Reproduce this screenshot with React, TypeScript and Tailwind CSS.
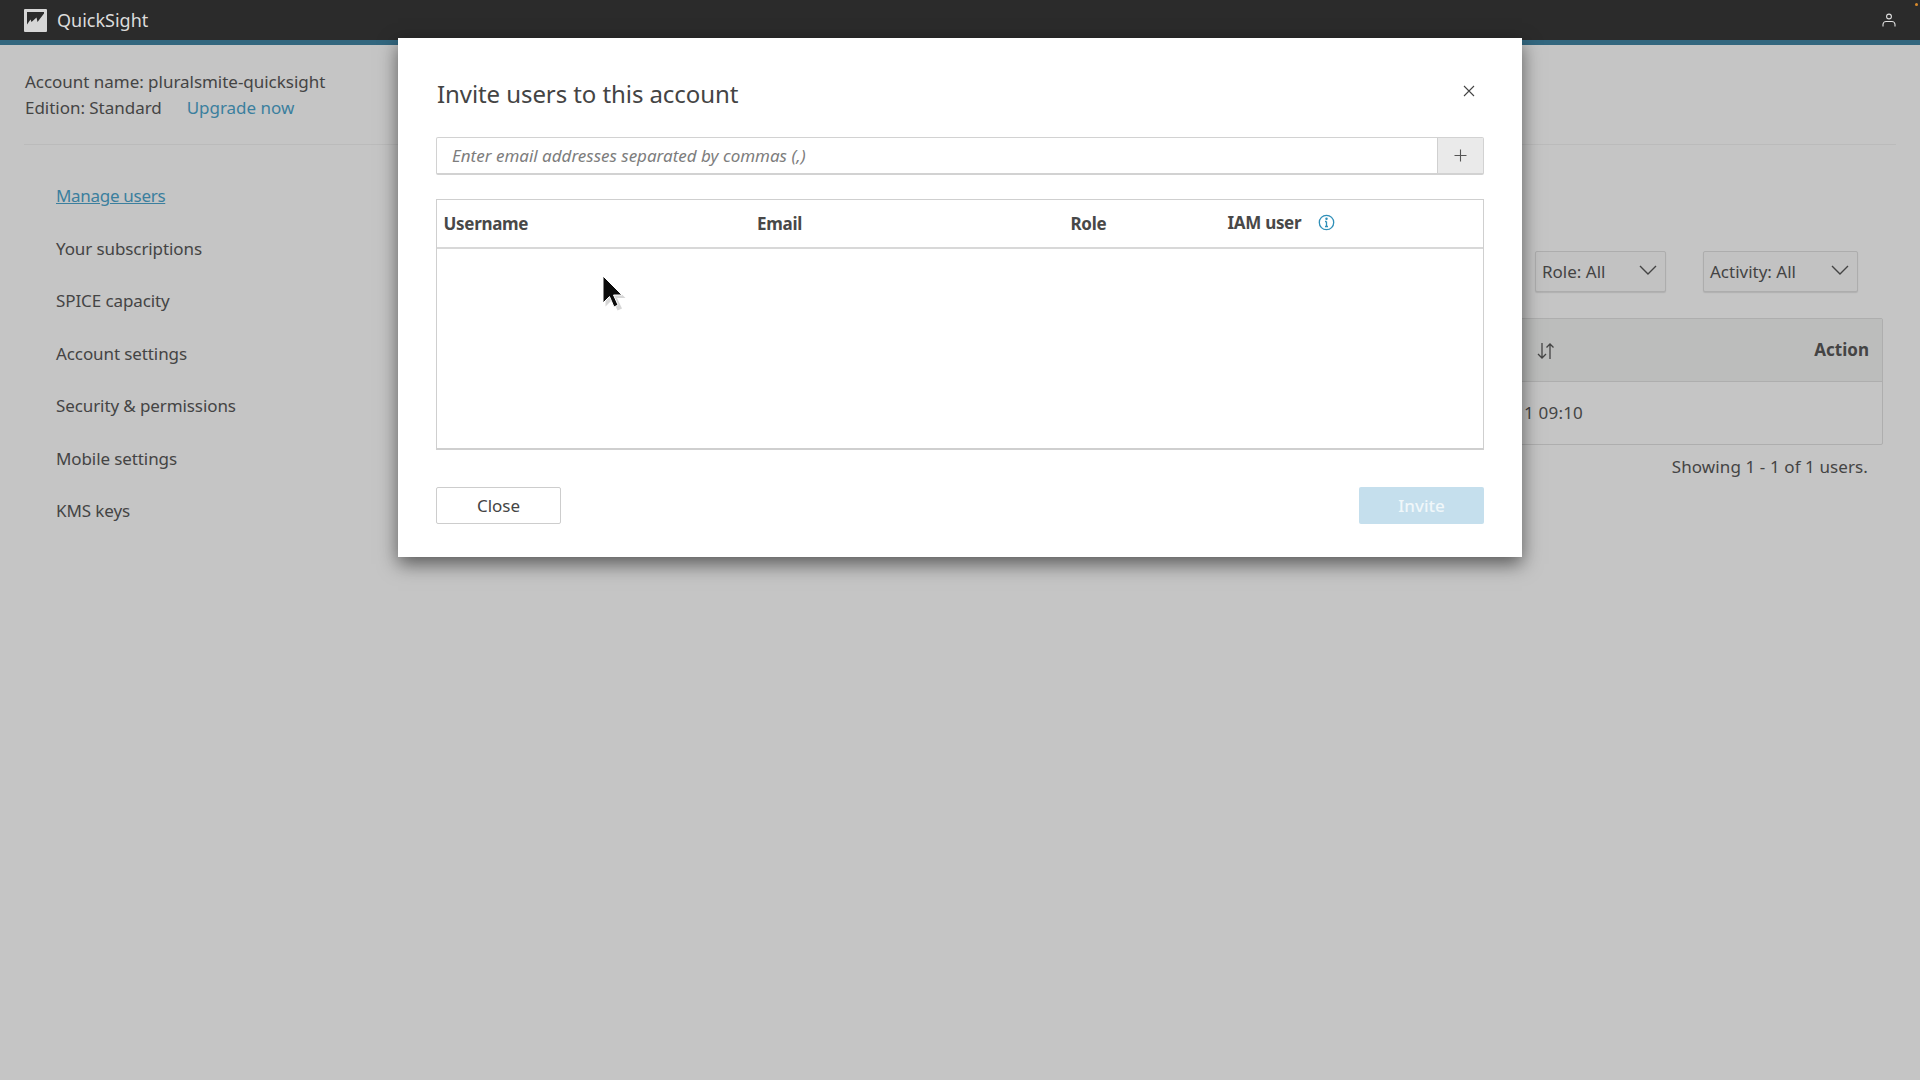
import React from "react";

const ember = "[font-family:'Noto_Sans','Liberation_Sans',sans-serif]";

const navItems = ["Your subscriptions", "SPICE capacity", "Account settings", "Security & permissions", "Mobile settings", "KMS keys"];

function Chevron() {
  return (
    <svg width="18" height="10" viewBox="0 0 18 10" fill="none" stroke="#444" strokeWidth="1.4">
      <path d="M1 1l8 8 8-8" />
    </svg>
  );
}

export default function App() {
  return (
    <div className={`relative w-[1920px] h-[1080px] overflow-hidden bg-[#c5c5c5] text-[#444] text-[17px] ${ember}`}>
      <header className="h-[40px] bg-[#2b2b2b] flex items-center justify-between pl-6 pr-[24px]">
        <div className="flex items-center gap-[10px]">
          <svg width="23" height="23" viewBox="0 0 23 23">
            <rect width="23" height="23" fill="#d6d6d6" rx="1" />
            <path d="M3 3h17v1.5L13.5 13 12.5 8.5 7.5 13 6.5 10.5 3 15.5z" fill="#2b2b2b" />
          </svg>
          <span className="text-[18px] text-[#dcdcdc]">QuickSight</span>
        </div>
        <svg width="14" height="14" viewBox="0 0 14 14" fill="none" stroke="#e0e0e0" strokeWidth="1.1">
          <circle cx="7" cy="3.5" r="2.4" />
          <path d="M1 13.5v-2c0-1.6 1.5-3 3-3h6c1.5 0 3 1.4 3 3v2" />
        </svg>
      </header>
      <div className="h-[5px] bg-[#33677f]" />

      <div className="px-6">
        <div className="pt-[24px] pl-[1px] h-[100px] border-b border-[#bbbbbb] leading-[25.5px] tracking-[-0.03px]">
          <div>Account name: pluralsmite-quicksight</div>
          <div className="flex gap-[25px]">
            <span>Edition: Standard</span>
            <span className="text-[#3b7f9e]">Upgrade now</span>
          </div>
        </div>

        <div className="flex">
          <nav className="w-[400px] shrink-0 pl-[32px] pt-[40px] flex flex-col gap-[30px] leading-[22.5px] tracking-[-0.1px]">
            <span className="text-[#3b7f9e] underline tracking-[-0.3px]">Manage users</span>
            {navItems.map((t) => (
              <span key={t}>{t}</span>
            ))}
          </nav>
          <section className="flex-1 pt-[106px] pr-[13px]">
            <div className="flex justify-end gap-[37px] pr-[25px]">
              <div className="w-[131px] h-[41px] rounded-[2px] border border-[#adadad] bg-[#c2c2c2] shadow-[0_1px_1px_#b0b0b0] flex items-center justify-between pl-[6px] pr-[8px]">
                <span>Role: All</span>
                <span className="-mt-1"><Chevron /></span>
              </div>
              <div className="w-[155px] h-[41px] rounded-[2px] border border-[#adadad] bg-[#c2c2c2] shadow-[0_1px_1px_#b0b0b0] flex items-center justify-between pl-[6px] pr-[8px]">
                <span>Activity: All</span>
                <span className="-mt-1"><Chevron /></span>
              </div>
            </div>
            <div className="mt-[26px] border border-[#aeaeae] rounded-[2px]">
              <div className="h-[63px] bg-[#bcbdbc] border-b border-[#aeaeae] flex items-center justify-between pl-[1112px] pr-[13px]">
                <svg className="mt-[2px]" width="18" height="18" viewBox="0 0 18 18" fill="none" stroke="#444" strokeWidth="1.3">
                  <path d="M5 1v15M1 12l4 4 4-4" />
                  <path d="M13 17V2M9.5 5.5L13 2l3.5 3.5" />
                </svg>
                <span className="font-bold -mt-[1px]">Action</span>
              </div>
              <div className="h-[62px] flex items-center justify-end pr-[299px] tracking-[0.2px]">1 09:10</div>
            </div>
            <div className="mt-[9px] text-right pr-[15px] leading-[26px] tracking-[0.1px]">Showing 1 - 1 of 1 users.</div>
          </section>
        </div>
      </div>

      <div className="absolute left-[398px] top-[38px] w-[1124px] h-[519px] bg-white shadow-[0_7px_18px_rgba(0,0,0,0.55)] pt-[38px] px-[38px] flex flex-col">
        <div className="flex items-start justify-between h-[61px]">
          <h1 className="text-[24px] leading-[36px] text-[#444] pl-[1px] tracking-[-0.08px]">Invite users to this account</h1>
          <svg className="mt-[9px] mr-[9px]" width="12" height="12" viewBox="0 0 12 12" fill="none" stroke="#444" strokeWidth="1.1">
            <path d="M1 1l10 10M11 1L1 11" />
          </svg>
        </div>
        <div className="flex h-[38px] border border-b-2 border-[#d2d2d2] rounded-[2px]">
          <div className="flex-1 pl-[15px] flex items-center italic text-[#7d7d7d]">Enter email addresses separated by commas (,)</div>
          <div className="w-[46px] bg-[#eaeaea] border-l border-[#d0d0d0] flex items-center justify-center">
            <svg width="13" height="13" viewBox="0 0 13 13" fill="none" stroke="#555" strokeWidth="1.1">
              <path d="M6.5 0.5v12M0.5 6.5h12" />
            </svg>
          </div>
        </div>
        <div className="mt-[24px] h-[251px] border border-[#cfcfcf] border-b-2">
          <div className="h-[49px] border-b-2 border-[#d8d8d8] grid grid-cols-[313.5px_313.5px_157px_1fr] pl-[6.5px] items-center font-bold text-[#484848] tracking-[-0.3px]">
            <span>Username</span>
            <span>Email</span>
            <span>Role</span>
            <span className="flex items-center gap-[17px] -mt-[2px]">
              IAM user
              <svg width="17" height="17" viewBox="0 0 17 17" fill="none" stroke="#2f8fb8" strokeWidth="1.3">
                <circle cx="8.5" cy="8.5" r="7.2" />
                <path d="M8.5 7.5v5M7 12.5h3M7 7.5h1.5" />
                <circle cx="8.5" cy="4.8" r="0.6" fill="#2f8fb8" />
              </svg>
            </span>
          </div>
        </div>
        <div className="mt-[37px] flex justify-between">
          <div className="w-[125px] h-[37px] rounded-[2px] border border-[#cdcdcd] flex items-center justify-center">Close</div>
          <div className="w-[125px] h-[37px] rounded-[2px] bg-[#c5dfed] text-[#f0f7fa] font-medium flex items-center justify-center">Invite</div>
        </div>
      </div>

      <svg className="absolute left-[600px] top-[274px]" width="28" height="40" viewBox="0 0 28 40">
        <path d="M4 3v28l7-7 5 11 4.5-2-5-10.5H24z" fill="#bbbbbb" opacity="0.6" transform="translate(1.5 1.5)" />
        <path d="M3 2v27l6.5-6.5 4.5 10.5 4-2-4.5-10H22z" fill="#0b0b0b" stroke="#fff" strokeWidth="1" />
      </svg>
      <div className="absolute right-[2px] top-[3px] w-[3px] h-[3px] rounded-full bg-[#d98a2b]" />
    </div>
  );
}
